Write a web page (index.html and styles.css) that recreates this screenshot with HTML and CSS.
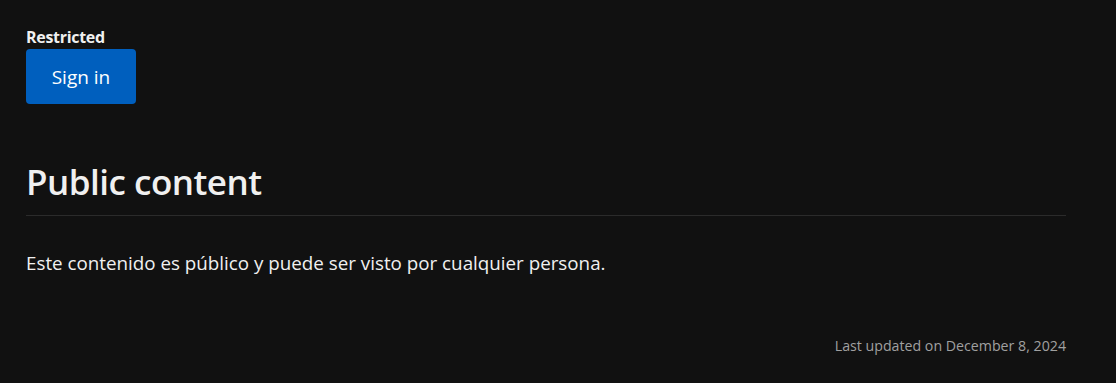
FILE: index.html
```html
<!DOCTYPE html>
<html lang="es">
<head>
    <meta charset="UTF-8">
    <meta name="viewport" content="width=device-width, initial-scale=1.0">
    <title>Public content</title>
    <link rel="stylesheet" href="styles.css">
</head>
<body>
    <div class="container">
        <!-- Acceso restringido -->
        <div class="restricted">
            <div class="restricted-label">Restricted</div>
            <button class="btn-signin">Sign in</button>
        </div>

        <!-- Contenido público -->
        <h1>Public content</h1>
        <p class="content">Este contenido es público y puede ser visto por cualquier persona.</p>

        <footer class="updated">Last updated on December 8, 2024</footer>
    </div>
</body>
</html>
```

FILE: styles.css
```css
body {
    font-family: "Open Sans", "Noto Sans", sans-serif;
    background-color: #111111;
    color: #f0f0f0;
    margin: 0;
    padding: 0;
}

.container {
    padding: 27px 50px 0 26px;
}

.restricted-label {
    font-size: 16px;
    font-weight: bold;
    line-height: 20px;
    letter-spacing: -0.3px;
}

.btn-signin {
    display: block;
    margin-top: 2px;
    width: 110px;
    height: 55px;
    background-color: #005fbe;
    color: #fff;
    font-family: inherit;
    font-size: 19px;
    border: none;
    border-radius: 4px;
    cursor: pointer;
}

h1 {
    margin: 50px 0 0;
    padding-bottom: 5px;
    font-size: 35px;
    font-weight: 600;
    line-height: 56px;
    border-bottom: 1px solid #2b2b2b;
    letter-spacing: -0.5px;
}

.content {
    margin: 33px 0 0;
    font-size: 18.8px;
    line-height: 28px;
}

.updated {
    margin-top: 59px;
    text-align: right;
    font-size: 14.2px;
    color: #a0a0a0;
}
```
